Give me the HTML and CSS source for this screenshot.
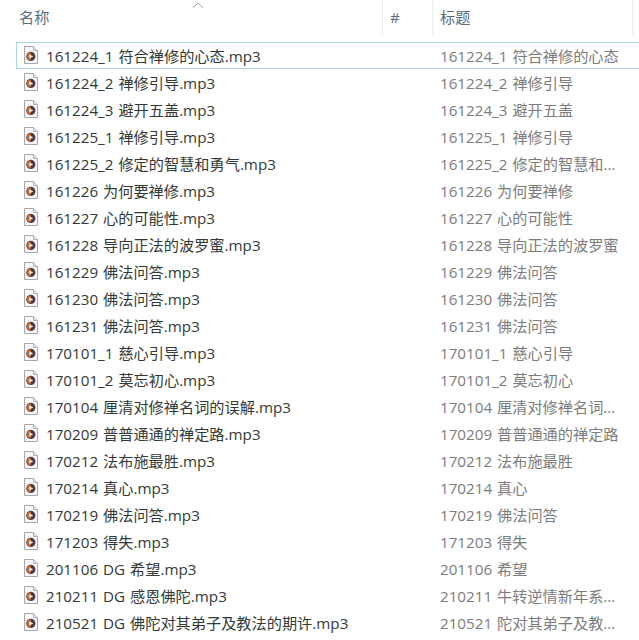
FILE: index.html
```html
<!DOCTYPE html>
<html lang="zh-CN">
<head>
<meta charset="utf-8">
<title>文件列表</title>
<link rel="stylesheet" href="styles.css">
</head>
<body>
<svg class="sprite" width="0" height="0" aria-hidden="true">
  <symbol id="audio" viewBox="0 0 14 18">
    <path d="M.5.5H9.5L13.5 4.5V17.5H.5Z" fill="#f8f6f8" stroke="#a9a5ab"/>
    <path d="M9.5.5V4.5H13.5" fill="#e4e2e6" stroke="#b4b0b6"/>
    <circle cx="6.8" cy="10.4" r="4.6" fill="#4a3a4b"/>
    <path d="M6.8 6.6A3.8 3.8 0 0 0 6.8 14.2Z" fill="#c9702c"/>
    <path d="M5.4 8.2L9.2 10.4L5.4 12.6Z" fill="#f6f0ea"/>
  </symbol>
</svg>
<div class="sort-arrow"><svg width="12" height="7" viewBox="0 0 12 7"><path d="M1 6L6 1L11 6" fill="none" stroke="#a5a9ad" stroke-width="1"/></svg></div>
<header class="head">
  <div class="hcol hname">名称</div>
  <div class="hcol hnum">#</div>
  <div class="hcol htitle">标题</div>
</header>
<main class="list">
  <div class="row selected"><div class="name"><svg class="icon"><use href="#audio"/></svg><span>161224_1 符合禅修的心态.mp3</span></div><div class="title">161224_1 符合禅修的心态</div></div>
  <div class="row"><div class="name"><svg class="icon"><use href="#audio"/></svg><span>161224_2 禅修引导.mp3</span></div><div class="title">161224_2 禅修引导</div></div>
  <div class="row"><div class="name"><svg class="icon"><use href="#audio"/></svg><span>161224_3 避开五盖.mp3</span></div><div class="title">161224_3 避开五盖</div></div>
  <div class="row"><div class="name"><svg class="icon"><use href="#audio"/></svg><span>161225_1 禅修引导.mp3</span></div><div class="title">161225_1 禅修引导</div></div>
  <div class="row"><div class="name"><svg class="icon"><use href="#audio"/></svg><span>161225_2 修定的智慧和勇气.mp3</span></div><div class="title">161225_2 修定的智慧和...</div></div>
  <div class="row"><div class="name"><svg class="icon"><use href="#audio"/></svg><span>161226 为何要禅修.mp3</span></div><div class="title">161226 为何要禅修</div></div>
  <div class="row"><div class="name"><svg class="icon"><use href="#audio"/></svg><span>161227 心的可能性.mp3</span></div><div class="title">161227 心的可能性</div></div>
  <div class="row"><div class="name"><svg class="icon"><use href="#audio"/></svg><span>161228 导向正法的波罗蜜.mp3</span></div><div class="title">161228 导向正法的波罗蜜</div></div>
  <div class="row"><div class="name"><svg class="icon"><use href="#audio"/></svg><span>161229 佛法问答.mp3</span></div><div class="title">161229 佛法问答</div></div>
  <div class="row"><div class="name"><svg class="icon"><use href="#audio"/></svg><span>161230 佛法问答.mp3</span></div><div class="title">161230 佛法问答</div></div>
  <div class="row"><div class="name"><svg class="icon"><use href="#audio"/></svg><span>161231 佛法问答.mp3</span></div><div class="title">161231 佛法问答</div></div>
  <div class="row"><div class="name"><svg class="icon"><use href="#audio"/></svg><span>170101_1 慈心引导.mp3</span></div><div class="title">170101_1 慈心引导</div></div>
  <div class="row"><div class="name"><svg class="icon"><use href="#audio"/></svg><span>170101_2 莫忘初心.mp3</span></div><div class="title">170101_2 莫忘初心</div></div>
  <div class="row"><div class="name"><svg class="icon"><use href="#audio"/></svg><span>170104 厘清对修禅名词的误解.mp3</span></div><div class="title">170104 厘清对修禅名词...</div></div>
  <div class="row"><div class="name"><svg class="icon"><use href="#audio"/></svg><span>170209 普普通通的禅定路.mp3</span></div><div class="title">170209 普普通通的禅定路</div></div>
  <div class="row"><div class="name"><svg class="icon"><use href="#audio"/></svg><span>170212 法布施最胜.mp3</span></div><div class="title">170212 法布施最胜</div></div>
  <div class="row"><div class="name"><svg class="icon"><use href="#audio"/></svg><span>170214 真心.mp3</span></div><div class="title">170214 真心</div></div>
  <div class="row"><div class="name"><svg class="icon"><use href="#audio"/></svg><span>170219 佛法问答.mp3</span></div><div class="title">170219 佛法问答</div></div>
  <div class="row"><div class="name"><svg class="icon"><use href="#audio"/></svg><span>171203 得失.mp3</span></div><div class="title">171203 得失</div></div>
  <div class="row"><div class="name"><svg class="icon"><use href="#audio"/></svg><span>201106 DG 希望.mp3</span></div><div class="title">201106 希望</div></div>
  <div class="row"><div class="name"><svg class="icon"><use href="#audio"/></svg><span>210211 DG 感恩佛陀.mp3</span></div><div class="title">210211 牛转逆情新年系...</div></div>
  <div class="row"><div class="name"><svg class="icon"><use href="#audio"/></svg><span>210521 DG 佛陀对其弟子及教法的期许.mp3</span></div><div class="title">210521 陀对其弟子及教...</div></div>
</main>
</body>
</html>
```

FILE: styles.css
```css
html, body {
  margin: 0;
  height: 100%;
  background: #fff;
  overflow: hidden;
}
body {
  position: relative;
  font-family: "Open Sans", "Noto Sans CJK SC", sans-serif;
  font-size: 15.2px;
  word-spacing: 1px;
  color: #333a36;
}
.sprite {
  position: absolute;
}
.sort-arrow {
  position: absolute;
  left: 192px;
  top: 0;
  line-height: 0;
  padding-top: 2px;
}
.head {
  display: flex;
  height: 34px;
  padding-bottom: 8px;
  color: #5b6b80;
}
.hcol {
  box-sizing: border-box;
  height: 34px;
  line-height: 35px;
  border-right: 1px solid #e8eaec;
}
.hname {
  width: 383px;
  padding-left: 19px;
}
.hnum {
  width: 50px;
  padding-left: 7px;
}
.htitle {
  width: 200px;
  padding-left: 7px;
}
.list {
  display: flex;
  flex-direction: column;
  padding-left: 16px;
}
.row {
  display: flex;
  box-sizing: border-box;
  height: 27px;
  align-items: center;
  padding-bottom: 2px;
  border: 1px solid transparent;
  border-right: 0;
}
.row.selected {
  border-color: #a9d3e8;
}
.name {
  display: flex;
  align-items: center;
  width: 423px;
  white-space: nowrap;
}
.icon {
  width: 14px;
  height: 18px;
  margin: 0 8px 0 7px;
  flex: none;
}
.title {
  color: #7c7c7c;
  white-space: nowrap;
}
```
